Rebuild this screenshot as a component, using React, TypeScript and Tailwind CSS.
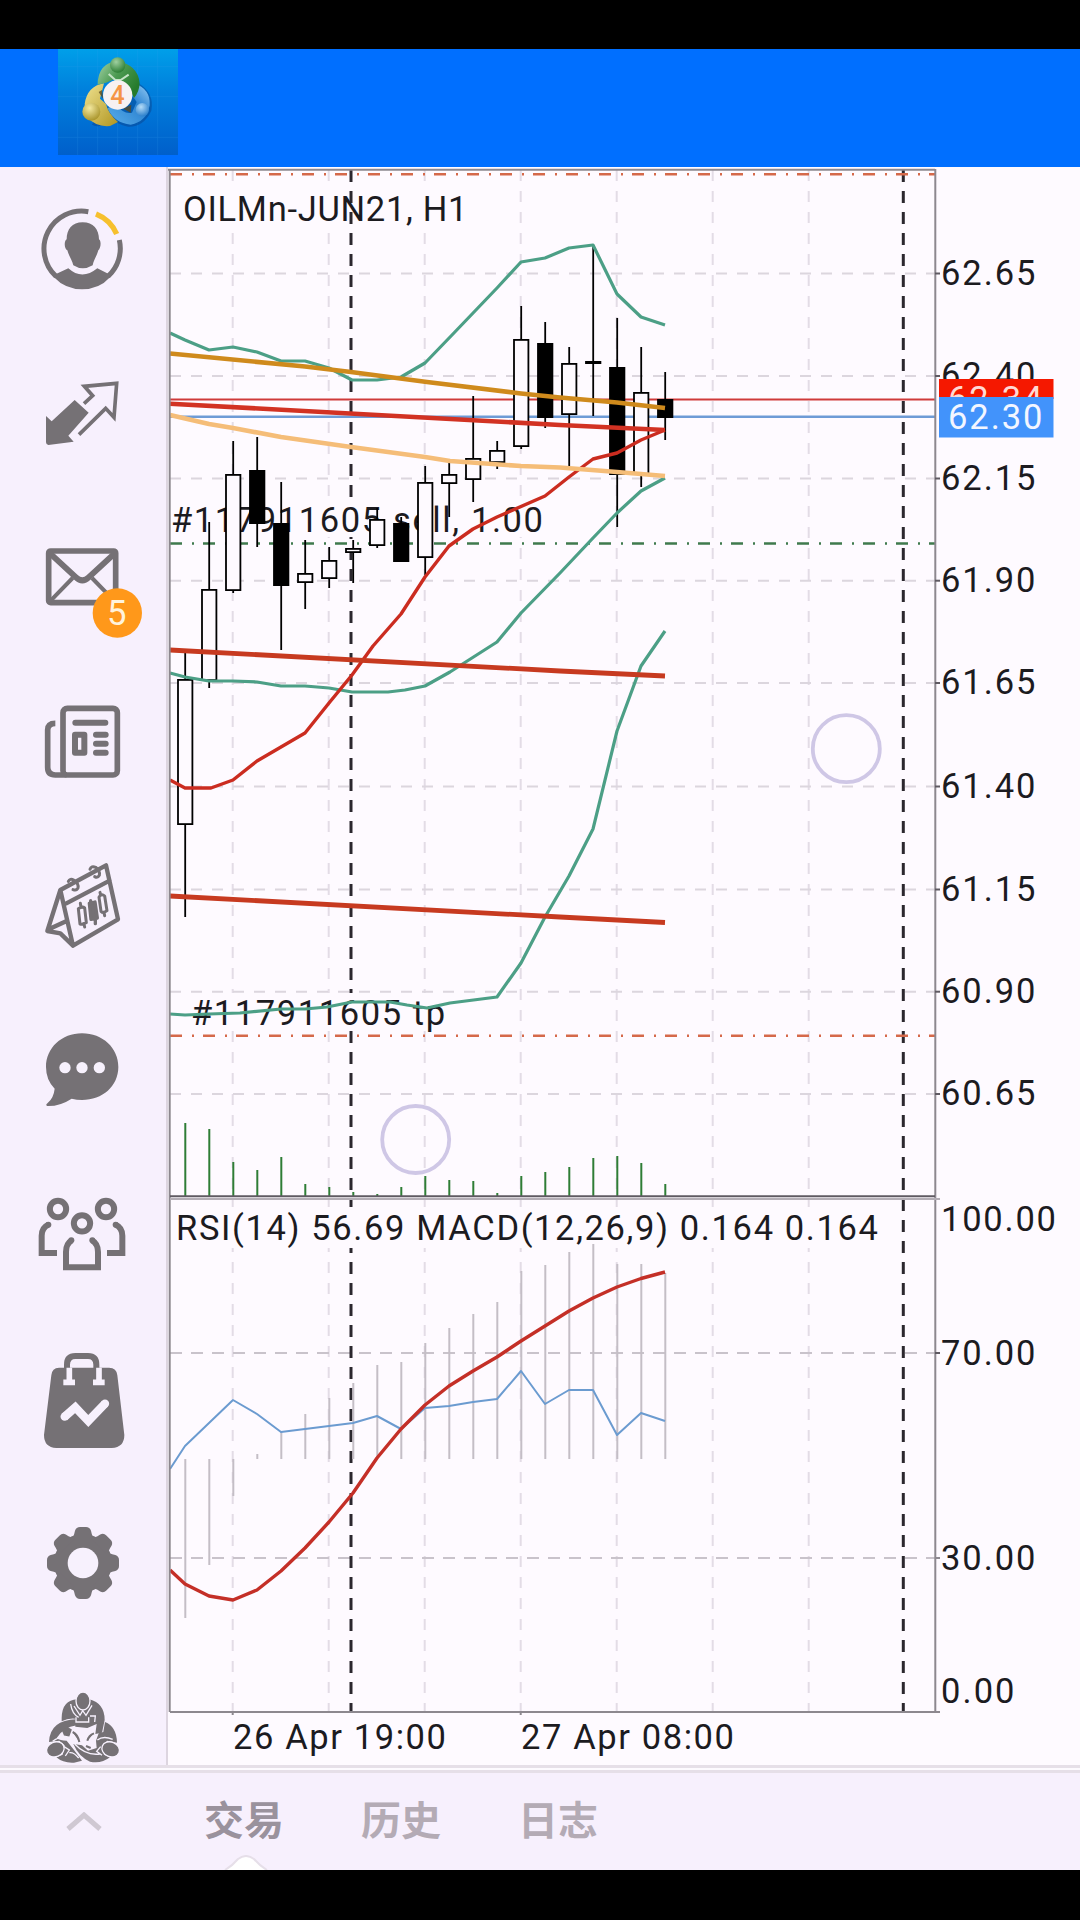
import type { ReactNode } from 'react';

// x, high, body top, body bottom, low, filled
type Candle = [number, number, number, number, number, boolean];

const candles: Candle[] = [
  [185, 650, 679, 825, 917, false],
  [209, 522, 589, 681, 688, false],
  [233, 441, 474, 591, 593, false],
  [257, 437, 470, 524, 547, true],
  [281, 482, 523, 586, 650, true],
  [305, 540, 573, 583, 609, false],
  [329, 547, 560, 579, 588, false],
  [353, 540, 548, 553, 583, false],
  [377, 508, 519, 546, 548, false],
  [401, 517, 523, 562, 562, true],
  [425, 466, 482, 558, 575, false],
  [449, 463, 474, 484, 517, false],
  [473, 396, 458, 480, 502, false],
  [497, 441, 450, 463, 469, false],
  [521, 306, 339, 447, 449, false],
  [545, 322, 343, 418, 428, true],
  [569, 347, 363, 415, 466, false],
  [593, 245, 361, 364, 416, false],
  [617, 318, 367, 475, 527, true],
  [641, 347, 392, 475, 487, false],
  [665, 372, 399, 418, 440, true],
];

const volumes = [1123, 1129, 1162, 1170, 1157, 1184, 1187, 1192, 1194, 1187, 1176, 1180, 1181, 1193, 1176, 1172, 1167, 1158, 1156, 1163, 1184];

const macd = [1618, 1565, 1496, 1454, 1431, 1414, 1398, 1383, 1365, 1362, 1343, 1328, 1314, 1302, 1271, 1265, 1252, 1244, 1264, 1264, 1273];

const prices = [
  { label: '62.65', y: 273.5 },
  { label: '62.40', y: 376 },
  { label: '62.15', y: 478.5 },
  { label: '61.90', y: 580.7 },
  { label: '61.65', y: 683 },
  { label: '61.40', y: 786.5 },
  { label: '61.15', y: 889.5 },
  { label: '60.90', y: 991.7 },
  { label: '60.65', y: 1094 },
];

const gridX = [232.7, 328.7, 424.7, 520.7, 616.7, 712.7, 808.7];

const upperBand = '170,333 185,340 209,350 233,347 257,352 281,361 305,361 329,368 352,380 377,380 401,377 425,363 452,335 497,288 521,262 545,258 569,248 593,245 617,294 641,317 665,325';
const middleBand = '170,673 185,677 209,681 233,681 257,682 281,686 305,686 329,688 352,692 388,692 405,690 425,686 450,672 497,642 521,613 560,573 593,538 617,513 641,491 665,478';
const lowerBand = '170,1014 185,1015 209,1014 240,1013 281,1009 305,1009 327,1007 352,1002 390,1002 407,1005 427,1008 450,1003 497,997 521,963 545,917 569,876 593,829 617,731 641,666 665,631';
const fastMa = '170,780 185,788 211,788 233,780 257,761 305,733 329,703 352,675 373,646 401,614 425,577 449,546 473,529 497,517 545,496 569,477 593,459 617,453 641,440 665,430';
const slowMa = '170,353.5 305,366.5 351,372 427,382 521,393.5 560,397.5 617,402.5 665,408';
const peachMa = '170,415 209,424 233,428 281,437 351,447 425,457 450,461 521,466 560,467.5 617,472 665,476';
const rsi = '170,1469 185,1446 209,1423 233,1400 257,1414 281,1432 305,1429 329,1426 353,1423 377,1416 401,1429 425,1408 449,1406 473,1402 497,1399 521,1371 545,1404 569,1390 593,1390 617,1435 641,1413 665,1421';
const signal = '170,1570 185,1584 209,1596 233,1600 257,1590 281,1571 305,1548 329,1522 353,1493 377,1458 401,1429 425,1405 449,1386 473,1371 497,1357 521,1341 545,1326 569,1311 593,1298 617,1287 641,1278.5 665,1272';

function Label({ x, y, w, fill = '#1c1b1f', children }: { x: number; y: number; w: number; fill?: string; children: string }) {
  return (
    <text x={x} y={y} textLength={w} fontSize="34.5" fill={fill} xmlSpace="preserve">
      {children}
    </text>
  );
}

function Chart() {
  return (
    <svg className="block h-full w-full" viewBox="168 167 912 1598" fontFamily="Roboto, 'Noto Sans', sans-serif">
      {/* grid */}
      <g stroke="#e3dce6" strokeWidth="2" strokeDasharray="11 10">
        {gridX.map((x) => (
          <g key={x}>
            <line x1={x} y1={170} x2={x} y2={1196} />
            <line x1={x} y1={1199} x2={x} y2={1712} />
          </g>
        ))}
        {prices.map((p) => (
          <line key={p.label} x1={170} y1={p.y} x2={935} y2={p.y} stroke="#dcd6de" />
        ))}
      </g>
      <g stroke="#c9c3cb" strokeWidth="2" strokeDasharray="12 9">
        <line x1={170} y1={1353} x2={935} y2={1353} />
        <line x1={170} y1={1558} x2={935} y2={1558} />
      </g>

      {/* captions hide the grid below them */}
      <rect x={182} y={190} width={284} height={41} fill="#fefaff" />

      {/* day separators */}
      <g stroke="#2b272e" strokeWidth="3" strokeDasharray="12 9">
        <line x1={351} y1={170} x2={351} y2={1196} />
        <line x1={903.3} y1={170} x2={903.3} y2={1196} />
        <line x1={351} y1={1199} x2={351} y2={1712} />
        <line x1={903.3} y1={1199} x2={903.3} y2={1712} />
      </g>
      <g fill="#fefaff">
        <rect x={172} y={499} width={372} height={38} />
        <rect x={190} y={993} width={258} height={38} />
        <rect x={175} y={1207} width={706} height={41} />
      </g>

      {/* order levels */}
      <g strokeWidth="2.4" strokeDasharray="12 10 2 9">
        <line x1={170} y1={174.3} x2={935} y2={174.3} stroke="#d5694a" />
        <line x1={170} y1={543.5} x2={935} y2={543.5} stroke="#3f7a4d" />
        <line x1={170} y1={1035.7} x2={935} y2={1035.7} stroke="#d5694a" />
      </g>
      <line x1={170} y1={399.5} x2={935} y2={399.5} stroke="#cf3a3a" strokeWidth="2" />
      <line x1={170} y1={416.7} x2={935} y2={416.7} stroke="#6e9bd6" strokeWidth="2.4" />

      <Label x={183} y={221} w={284.5}>OILMn-JUN21, H1</Label>
      <Label x={171} y={531.5} w={372}>#117911605 sell, 1.00</Label>
      <Label x={191} y={1024.5} w={254}>#117911605 tp</Label>
      <Label x={176} y={1240} w={702}>RSI(14) 56.69 MACD(12,26,9) 0.164 0.164</Label>

      {/* volumes and MACD histogram */}
      <g stroke="#2f7d36" strokeWidth="2">
        {volumes.map((y, i) => (
          <line key={i} x1={185.3 + i * 24} y1={y} x2={185.3 + i * 24} y2={1196} />
        ))}
      </g>
      <g stroke="#c4bec6" strokeWidth="2">
        {macd.map((y, i) => (
          <line key={i} x1={185.3 + i * 24} y1={y} x2={185.3 + i * 24} y2={1459} />
        ))}
      </g>

      {candles.map(([x, high, top, bottom, low, filled]) => (
        <g key={x} stroke="#000" strokeWidth="1.8" fill={filled ? '#000' : '#fefaff'}>
          <line x1={x + 0.2} y1={high} x2={x + 0.2} y2={low} />
          <rect x={x - 7} y={top + 0.9} width={14.4} height={bottom - top - 1.8} />
        </g>
      ))}

      <g fill="none" strokeLinejoin="round">
        <g stroke="#4c9f86" strokeWidth="3.2">
          <polyline points={upperBand} />
          <polyline points={middleBand} />
          <polyline points={lowerBand} />
        </g>
        <polyline points={fastMa} stroke="#cb2c20" strokeWidth="3.4" />
        <polyline points={slowMa} stroke="#cf8a1c" strokeWidth="4.6" />
        <polyline points={peachMa} stroke="#f5bd78" strokeWidth="4.6" />
        <polyline points="170,403.7 560,425 665,430" stroke="#d23223" strokeWidth="4.6" />
        <polyline points="170,650 560,671 665,676" stroke="#c73a20" strokeWidth="4.8" />
        <polyline points="170,896 560,917 665,922.5" stroke="#c73a20" strokeWidth="4.8" />
        <polyline points={rsi} stroke="#6b9bd0" strokeWidth="2" />
        <polyline points={signal} stroke="#c42f27" strokeWidth="3.4" />
      </g>

      {/* touch points */}
      <g fill="none" stroke="#cfc7e6" strokeWidth="3.8">
        <circle cx={846.3} cy={748.7} r={33.5} />
        <circle cx={415.7} cy={1139.5} r={33.5} />
      </g>

      {/* frame */}
      <g stroke="#8d888f" strokeWidth="2">
        <line x1={168} y1={169.7} x2={935} y2={169.7} />
        <line x1={169.7} y1={169} x2={169.7} y2={1712} />
        <line x1={935.3} y1={169} x2={935.3} y2={1712} />
        <line x1={170} y1={1196.3} x2={935} y2={1196.3} stroke="#5f5a62" />
        <line x1={170} y1={1199} x2={940} y2={1199} stroke="#b3adb5" />
        <line x1={170} y1={1712} x2={940} y2={1712} />
        {prices.map((p) => (
          <line key={p.label} x1={935} y1={p.y} x2={940} y2={p.y} stroke="#5f5a62" />
        ))}
        <line x1={935} y1={1353} x2={940} y2={1353} stroke="#5f5a62" />
        <line x1={935} y1={1558} x2={940} y2={1558} />
        <line x1={232.7} y1={1712} x2={232.7} y2={1715} />
        <line x1={520.7} y1={1712} x2={520.7} y2={1715} />
      </g>

      {prices.map((p) => (
        <Label key={p.label} x={941} y={p.y + 11} w={94.5}>{p.label}</Label>
      ))}
      <Label x={941} y={1230.5} w={115}>100.00</Label>
      <Label x={941} y={1364.5} w={94.5}>70.00</Label>
      <Label x={941} y={1569.5} w={94.5}>30.00</Label>
      <Label x={941} y={1702.5} w={73.5}>0.00</Label>
      <Label x={233} y={1749} w={213}>26 Apr 19:00</Label>
      <Label x={521} y={1749} w={213}>27 Apr 08:00</Label>

      <rect x={939} y={379} width={114.5} height={20} fill="#f51800" />
      <Label x={948} y={411} w={94.5} fill="#ffd9d4">62.34</Label>
      <rect x={939} y={397} width={114.5} height={40.5} fill="#4293fb" />
      <Label x={948} y={428.5} w={94.5} fill="#f3f6ff">62.30</Label>
    </svg>
  );
}

function SideIcon({ top, children }: { top: number; children: ReactNode }) {
  return (
    <svg className="block h-[164px] w-[168px] shrink-0" viewBox={`0 ${top} 504 492`} fill="none">
      {children}
    </svg>
  );
}

const GRAY = '#757175';
const PAPER = '#f7f1fd';

function Sidebar() {
  return (
    <aside className="flex h-full w-[168px] shrink-0 flex-col overflow-hidden border-r-2 border-[#ddd5e0] bg-[#f7f0fd]">
      {/* account */}
      <SideIcon top={411}>
        <path d="M265 545 A113 113 0 0 0 168 739 M324 739 A113 113 0 0 0 358 630" stroke={GRAY} strokeWidth="15" />
        <path d="M288 552 A113 113 0 0 1 350 612" stroke="#f6c02e" strokeWidth="16" />
        <path d="M168 732 L205 715 Q246 752 292 715 L326 732 L330 742 Q298 778 246 778 Q196 778 162 742Z" fill={GRAY} />
        <path d="M248 577 C280 577 297 598 297 628 C305 634 302 656 295 661 C290 680 281 688 278 706 Q248 724 220 706 C216 688 207 680 202 661 C193 656 191 634 200 628 C200 598 216 577 248 577Z" fill={GRAY} />
      </SideIcon>

      {/* trade */}
      <SideIcon top={-27}>
        <path d="M138 228 L155 244 L224 180 L266 218 L205 287 L221 305 L145 315 Q138 314 138 307Z" fill={GRAY} />
        <path d="M252 191 L278 167 L253 139 L350 130 L342 232 L317 205 L237 284" stroke={GRAY} strokeWidth="11" />
      </SideIcon>

      {/* mail */}
      <SideIcon top={465}>
        <rect x="146" y="633" width="201" height="155" rx="6" stroke={GRAY} strokeWidth="17" />
        <path d="M150 640 L228 712 Q247 730 266 712 L344 640" stroke={GRAY} strokeWidth="18" />
        <path d="M152 782 L218 714 M342 782 L276 714" stroke={GRAY} strokeWidth="12" />
        <circle cx="352" cy="819" r="74" fill="#ff981a" />
        <text x="350" y="855" fontSize="104" textAnchor="middle" fill="#fff3dc" fontFamily="Roboto, sans-serif">5</text>
      </SideIcon>

      {/* news */}
      <SideIcon top={957}>
        <rect x="189" y="1105" width="163" height="200" rx="13" stroke={GRAY} strokeWidth="17" />
        <path d="M166 1150 Q143 1150 143 1170 V1282 Q143 1305 166 1305 H200" stroke={GRAY} strokeWidth="17" />
        <path d="M226 1148 H316 M288 1184 H317 M288 1211 H317 M288 1238 H317" stroke={GRAY} strokeWidth="18" strokeLinecap="round" />
        <rect x="225" y="1184" width="28" height="54" stroke={GRAY} strokeWidth="18" strokeLinejoin="round" />
      </SideIcon>

      {/* calendar */}
      <SideIcon top={9}>
        <g stroke={GRAY} strokeWidth="13" strokeLinejoin="round" strokeLinecap="round">
          <path d="M181 210 L318 136 L354 298 L219 377 L181 210 L142 333 L181 340 L219 377 M199 250 L329 182 M146 328 L200 303" />
          <path d="M205 184 Q210 174 221 180 Q237 190 234 204 Q230 213 219 209 M270 148 Q274 136 287 142 Q301 152 298 166 Q293 175 284 170" strokeWidth="9" />
          <path d="M235 266 L240 312 Q244 313 248 312 L259 308 L254 264 Q247 258 235 266Z M243 262 L241 250 M252 312 L254 321 M297 232 L303 274 Q310 281 321 272 L314 228 Q304 219 297 232Z M302 225 L300 217 M312 278 L314 287" strokeWidth="9" />
          <path d="M268 250 L273 298 L292 294 L285 246Z M272 242 V252 M286 298 V311" fill={GRAY} strokeWidth="10" />
        </g>
      </SideIcon>

      {/* chat */}
      <SideIcon top={501}>
        <path d="M246 640 C308 640 355 684 355 741 C355 798 308 840 246 840 Q230 840 215 836 Q180 859 142 858 Q135 855 143 849 Q161 834 164 806 Q138 780 138 741 C138 684 185 640 246 640Z" fill={GRAY} />
        <g fill={PAPER}>
          <circle cx="195" cy="743" r="17" />
          <circle cx="246" cy="743" r="17" />
          <circle cx="298" cy="743" r="17" />
        </g>
      </SideIcon>

      {/* community */}
      <SideIcon top={993}>
        <g stroke={GRAY} strokeWidth="18">
          <circle cx="174" cy="1167" r="24.5" />
          <circle cx="318" cy="1167" r="24.5" />
          <circle cx="246" cy="1210" r="24.5" />
          <path d="M171 1299 H125 V1247 Q125 1223 145 1214 M321 1299 H367 V1247 Q367 1223 347 1214" strokeLinejoin="miter" />
          <path d="M215 1261 Q198 1271 198 1296 V1342 H294 V1296 Q294 1271 276 1261" />
        </g>
        <g fill={GRAY}>
          <circle cx="145" cy="1214" r="9" />
          <circle cx="347" cy="1214" r="9" />
          <circle cx="214" cy="1261" r="9" />
          <circle cx="277" cy="1261" r="9" />
        </g>
      </SideIcon>

      {/* market */}
      <SideIcon top={-15}>
        <path d="M177 143 H327 Q350 143 352 166 L373 345 Q373 382 335 384 H169 Q132 382 132 345 L154 166 Q156 143 177 143Z" fill={GRAY} />
        <path d="M201 146 V134 Q201 108 226 108 H264 Q289 108 289 134 V146" stroke={GRAY} strokeWidth="18" />
        <path d="M208 143 V190 M297 143 V190" stroke={PAPER} strokeWidth="17" />
        <path d="M190 187 H225 M279 187 H314" stroke={PAPER} strokeWidth="17" />
        <path d="M193 291 L226 262 L265 303 L315 251" stroke={PAPER} strokeWidth="25" strokeLinejoin="miter" />
        <circle cx="194" cy="290" r="12.5" fill={PAPER} />
        <circle cx="315" cy="251" r="12.5" fill={PAPER} />
      </SideIcon>

      {/* settings */}
      <SideIcon top={477}>
        <g fill={GRAY}>
          <circle cx="249" cy="729" r="87" />
          {[0, 45, 90, 135, 180, 225, 270, 315].map((angle) => (
            <path key={angle} d="M213 660 Q221 652 225 632 Q229 621 240 621 H258 Q269 621 273 632 Q277 652 285 660Z" transform={`rotate(${angle} 249 729)`} />
          ))}
        </g>
        <circle cx="249" cy="729" r="46" fill={PAPER} />
      </SideIcon>

      {/* about */}
      <SideIcon top={969}>
        <g fill={GRAY}>
          <path d="M185 1194 Q186 1140 232 1138 L268 1138 Q314 1150 314 1200 L306 1238 L286 1242 L290 1212 L262 1224 L226 1220 L225 1196 Q204 1194 185 1204Z" />
          <path d="M229 1198 Q150 1200 147 1266 L178 1262 L194 1276 L188 1304 L169 1312 Q190 1330 222 1328 L246 1322 L222 1290 L200 1262 Q180 1262 170 1254 Q190 1222 230 1216Z" />
          <path d="M315 1206 Q350 1220 351 1268 L322 1262 L306 1278 L312 1304 L330 1312 Q304 1332 270 1325 Q236 1310 220 1272 L246 1276 L264 1292 L290 1284 L288 1262 L296 1240 L310 1236Z" />
        </g>
        <g stroke={PAPER} strokeWidth="4">
          <path d="M222 1158 L240 1186 L248 1172 L258 1186 L276 1156 M212 1152 Q216 1182 236 1192 M228 1192 V1206 H266 V1192 M270 1188 H286 L284 1206 M158 1264 Q185 1244 206 1254 M192 1280 L208 1290 L196 1308 M208 1298 Q222 1296 236 1314 M224 1272 Q258 1308 300 1302 M338 1258 Q310 1246 292 1260 M302 1280 L290 1294 L306 1306" />
          <ellipse cx="249" cy="1143" rx="21" ry="27" fill={GRAY} />
          <ellipse cx="166" cy="1288" rx="27" ry="22" fill={GRAY} transform="rotate(-22 166 1288)" />
          <ellipse cx="332" cy="1288" rx="27" ry="22" fill={GRAY} transform="rotate(22 332 1288)" />
        </g>
        <path d="M190 1234 L202 1224 L212 1230 L206 1246 L194 1244Z M218 1236 Q234 1244 238 1266 M282 1240 Q266 1246 262 1262 M258 1278 L272 1284" fill={GRAY} stroke={GRAY} strokeWidth="6" />
      </SideIcon>
    </aside>
  );
}

function AppLogo() {
  return (
    <svg className="block h-[106px] w-[120px]" viewBox="174 57 360 318">
      <defs>
        <linearGradient id="tile" x1="0" y1="0" x2="0" y2="1">
          <stop offset="0" stopColor="#009fe9" />
          <stop offset="0.4" stopColor="#007fdc" />
          <stop offset="1" stopColor="#005fcb" />
        </linearGradient>
        <linearGradient id="greenArm" x1="0" y1="0" x2="1" y2="0.6">
          <stop offset="0" stopColor="#a5d3a8" />
          <stop offset="0.5" stopColor="#4c9a51" />
          <stop offset="1" stopColor="#257a2b" />
        </linearGradient>
        <linearGradient id="goldArm" x1="0" y1="0" x2="1" y2="1">
          <stop offset="0" stopColor="#efe291" />
          <stop offset="1" stopColor="#b0951f" />
        </linearGradient>
        <linearGradient id="skyArm" x1="1" y1="0" x2="0" y2="1">
          <stop offset="0" stopColor="#9bd0f7" />
          <stop offset="0.4" stopColor="#2d84d2" />
          <stop offset="1" stopColor="#5aaeea" />
        </linearGradient>
        <radialGradient id="green" cx="0.4" cy="0.3" r="0.8">
          <stop offset="0" stopColor="#9fd0a0" />
          <stop offset="1" stopColor="#1f7426" />
        </radialGradient>
        <radialGradient id="gold" cx="0.4" cy="0.3" r="0.8">
          <stop offset="0" stopColor="#f4e9a0" />
          <stop offset="1" stopColor="#a08a1c" />
        </radialGradient>
        <radialGradient id="sky" cx="0.4" cy="0.3" r="0.8">
          <stop offset="0" stopColor="#b5dcf8" />
          <stop offset="1" stopColor="#1a74c6" />
        </radialGradient>
      </defs>
      <rect x="174" y="57" width="360" height="318" fill="url(#tile)" />
      <path d="M233 57 V375 M293 57 V375 M353 57 V375 M413 57 V375 M473 57 V375 M174 110 H534 M174 200 H534 M174 322 H534" stroke="#3fa5ee" strokeWidth="2" opacity="0.25" />
      {/* arms */}
      <path d="M416 160 Q464 190 454 242 Q430 292 384 290 Q350 284 330 262 Q310 300 276 284 L300 240 L400 200Z" fill="#0b3f86" opacity="0.45" />
      <path d="M404 160 Q452 178 449 226 Q440 276 392 284 Q344 280 322 234 L350 226 Q372 254 396 248 L410 216 L392 190Z" fill="url(#skyArm)" />
      <path d="M312 160 Q262 168 254 222 L262 262 Q288 292 330 288 L354 276 Q324 250 318 222 L300 206Z" fill="url(#goldArm)" />
      <path d="M293 164 Q294 100 350 94 Q414 104 419 160 Q418 186 402 204 L384 168 L346 146 L318 158Z" fill="url(#greenArm)" />
      <path d="M326 132 L346 150 L362 150 L386 134" fill="none" stroke="#c5e3c6" strokeWidth="6" />
      <path d="M296 186 L306 180 L310 208Z M370 236 L394 224 L392 248Z" fill="#5b4a22" opacity="0.8" />
      <circle cx="353" cy="105" r="23" fill="url(#green)" />
      <circle cx="274" cy="245" r="27" fill="url(#gold)" />
      <circle cx="427" cy="239" r="20" fill="url(#sky)" />
      <circle cx="353" cy="195" r="44" fill="#f7f1f2" />
      <text x="352" y="222" fontSize="76" fontWeight="500" textAnchor="middle" fill="#f59445" fontFamily="Roboto, sans-serif">4</text>
    </svg>
  );
}

const tabs = [
  { label: '交易', active: true },
  { label: '历史', active: false },
  { label: '日志', active: false },
];

function BottomTabs() {
  return (
    <nav className="relative flex h-[97px] items-center bg-[#f7f0fd] pb-2">
      <svg className="ml-[65px] mt-2 h-[20px] w-[38px] shrink-0" viewBox="0 0 38 20" fill="none">
        <path d="M3 17 L19 3 L35 17" stroke="#cfc8d2" strokeWidth="5" />
      </svg>
      <div className="ml-[101px] flex gap-[77px]">
        {tabs.map((tab) => (
          <span
            key={tab.label}
            className={`font-['Noto_Sans_CJK_SC',sans-serif] text-[40px] leading-none font-bold ${tab.active ? 'text-[#9a929d]' : 'text-[#b4abb5]'}`}
          >
            {tab.label}
          </span>
        ))}
      </div>
      <svg className="absolute bottom-0 left-[224px] h-[15px] w-[44px]" viewBox="0 0 44 15">
        <path d="M1 15 Q8 11 14 4 Q22 -2 30 4 Q36 11 43 15" fill="#fff" stroke="#e6dfe9" strokeWidth="2" />
      </svg>
    </nav>
  );
}

export default function App() {
  return (
    <div className="flex h-[1920px] w-[1080px] flex-col overflow-hidden bg-black pt-[49px]">
      <header className="h-[118px] shrink-0 bg-[#006fff] pl-[58px]">
        <AppLogo />
      </header>
      <main className="flex h-[1598px] shrink-0 bg-[#fefaff]">
        <Sidebar />
        <div className="h-full w-[912px]">
          <Chart />
        </div>
      </main>
      <div className="h-[8px] shrink-0 border-y-[3px] border-[#e6dfe8] bg-[#fdfaff]" />
      <BottomTabs />
    </div>
  );
}
